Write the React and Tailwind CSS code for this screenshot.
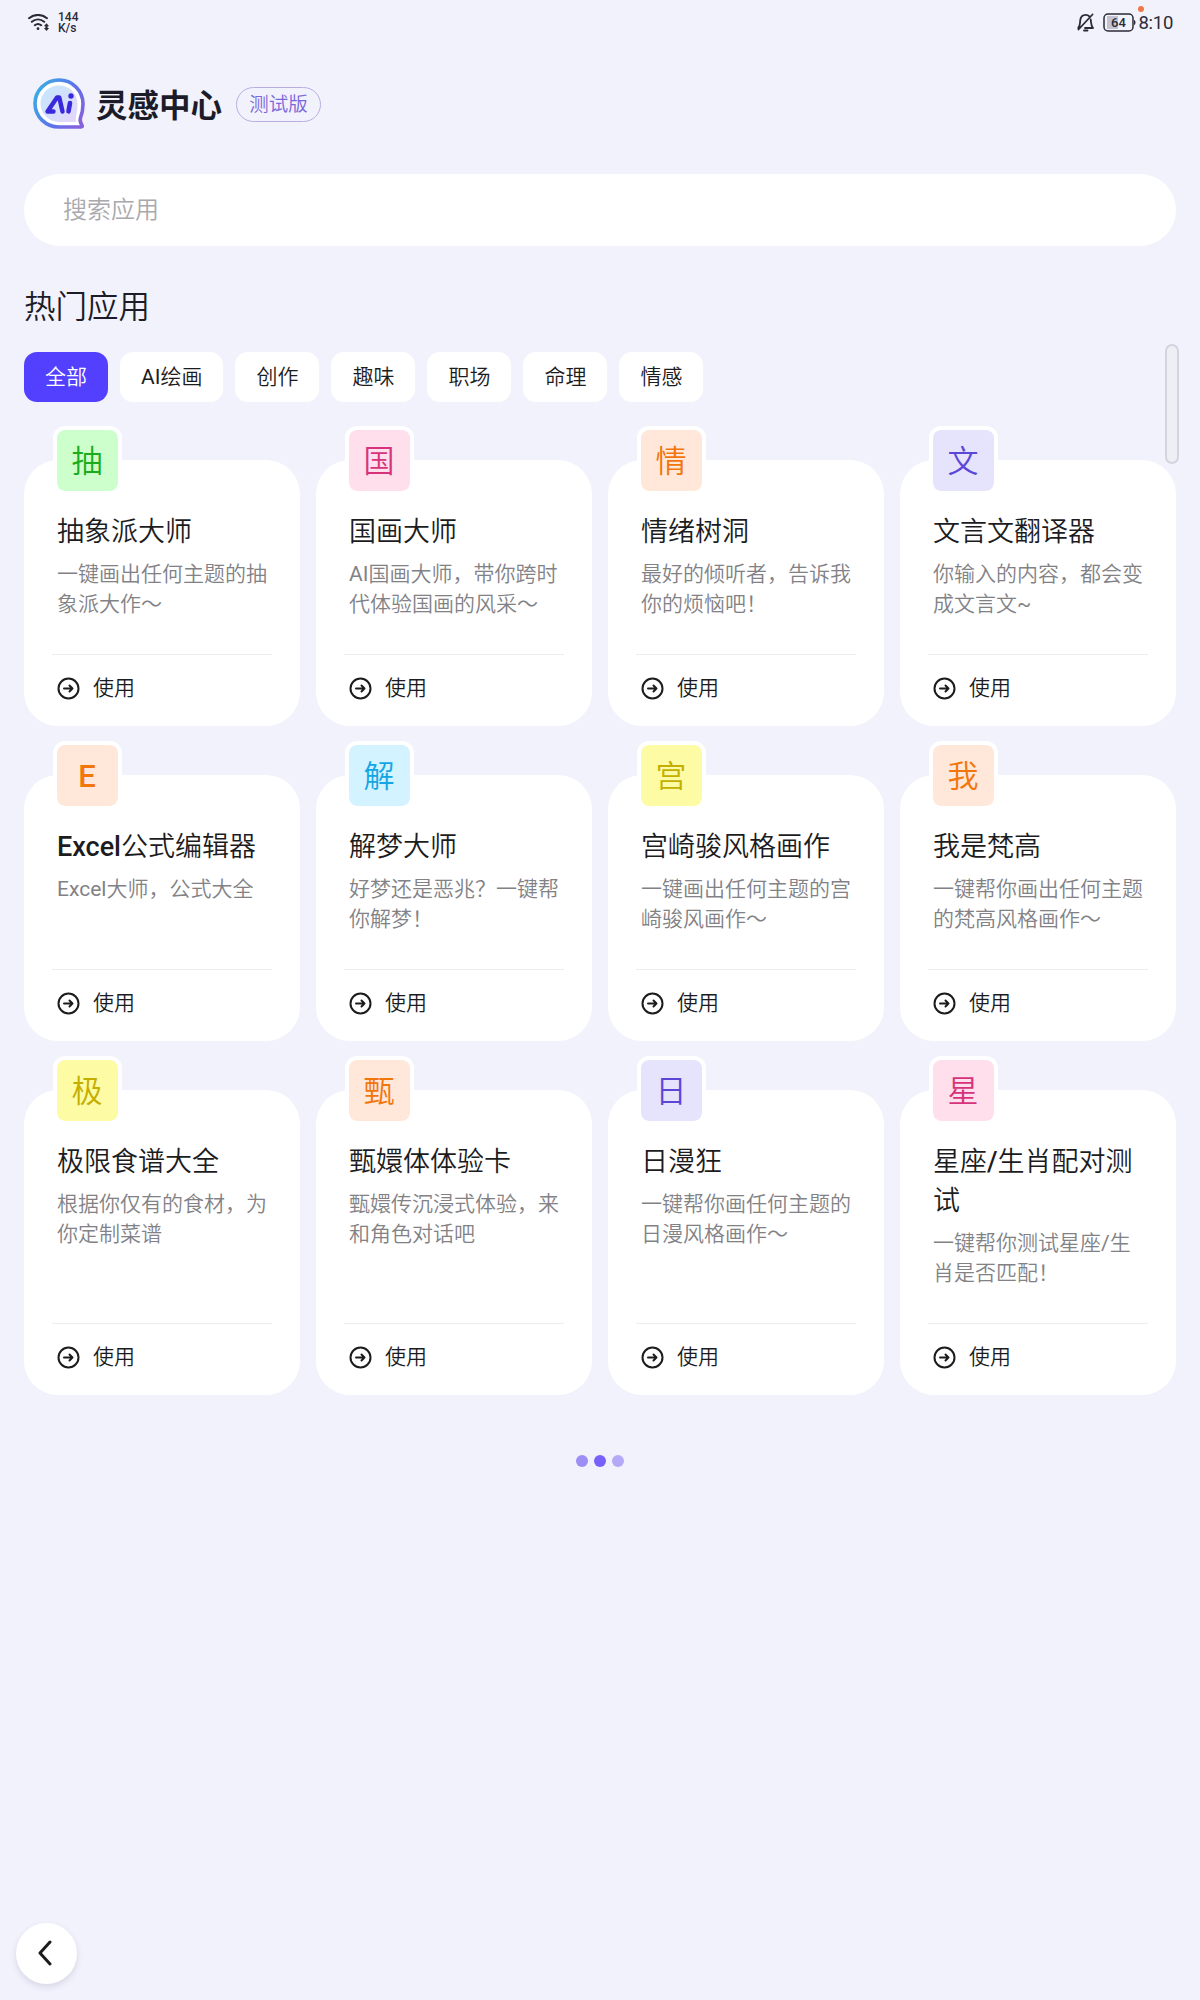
import React, { useState } from "react";

const apps = [
  { icon: "抽", name: "抽象派大师", desc: "一键画出任何主题的抽象派大作～", color: "bg-[#ccffcc] text-[#1aad19]" },
  { icon: "国", name: "国画大师", desc: "AI国画大师，带你跨时代体验国画的风采～", color: "bg-[#ffdfeb] text-[#d6337c]" },
  { icon: "情", name: "情绪树洞", desc: "最好的倾听者，告诉我你的烦恼吧！", color: "bg-[#ffe8d9] text-[#f2760c]" },
  { icon: "文", name: "文言文翻译器", desc: "你输入的内容，都会变成文言文~", color: "bg-[#e6e4fd] text-[#5b46d8]" },
  { icon: "E", name: "Excel公式编辑器", desc: "Excel大师，公式大全", color: "bg-[#ffe8d9] text-[#f2760c]" },
  { icon: "解", name: "解梦大师", desc: "好梦还是恶兆？一键帮你解梦！", color: "bg-[#d2f3ff] text-[#14a6e4]" },
  { icon: "宫", name: "宫崎骏风格画作", desc: "一键画出任何主题的宫崎骏风画作～", color: "bg-[#fdfba4] text-[#c4ae00]" },
  { icon: "我", name: "我是梵高", desc: "一键帮你画出任何主题的梵高风格画作～", color: "bg-[#ffe8d9] text-[#f2760c]" },
  { icon: "极", name: "极限食谱大全", desc: "根据你仅有的食材，为你定制菜谱", color: "bg-[#fdfba4] text-[#c4ae00]" },
  { icon: "甄", name: "甄嬛体体验卡", desc: "甄嬛传沉浸式体验，来和角色对话吧", color: "bg-[#ffe8d9] text-[#f2760c]" },
  { icon: "日", name: "日漫狂", desc: "一键帮你画任何主题的日漫风格画作～", color: "bg-[#e6e4fd] text-[#5b46d8]" },
  { icon: "星", name: "星座/生肖配对测试", desc: "一键帮你测试星座/生肖是否匹配！", color: "bg-[#ffdfeb] text-[#d6337c]" },
];

const tabs = ["全部", "AI绘画", "创作", "趣味", "职场", "命理", "情感"];

// Latin letters are set heavier than the Chinese text around them
const MixedText = ({ text, latin = "font-normal" }) =>
  text.split(/([A-Za-z/~]+)/).map((part, i) =>
    i % 2 ? (
      <span key={i} className={latin}>
        {part}
      </span>
    ) : (
      part
    )
  );

const StatusBar = () => (
  <div className="flex h-[45px] items-center justify-between pl-7 pr-[27px] text-[#2b2b38]">
    <div className="flex items-center">
      <svg width="22" height="18" viewBox="0 0 22 18" fill="none" stroke="currentColor" strokeWidth="2" strokeLinecap="round">
        <path d="M1 4.200C6.500-.2 13.500-.2 19 4.200M3.800 7.800c3.700-3.200 8.700-3.200 12.400 0M6.800 11.200c2-1.600 4.400-1.600 6.400 0" />
        <circle cx="10" cy="14.700" r="1.400" fill="currentColor" stroke="none" />
        <path d="M18.500 9.300l2.600 3h-1.500v1.700h1.500l-2.600 3-2.600-3h1.500v-1.700h-1.500z" fill="currentColor" stroke="none" />
      </svg>
      <div className="ml-2 text-[12px] font-medium leading-[11px]">
        <div>144</div>
        <div>K/s</div>
      </div>
    </div>
    <div className="relative flex items-center">
      <svg width="17" height="19" viewBox="0 0 17 19" fill="none" stroke="currentColor" strokeWidth="1.800" strokeLinecap="round" strokeLinejoin="round">
        <path d="M1.200 15C3.400 12.500 3 10 3.200 7.500 3.600 4 6 1.800 8.700 1.800c1.500 0 2.700.5 3.600 1.500M13.700 6.500c.5 3-.1 5.500 2.300 8.500H8M7 17.500h3.500M15.500 1.500L1.500 16.500" />
      </svg>
      <svg className="ml-[9px]" width="33" height="19" viewBox="0 0 33 19">
        <path d="M4 3h11v13H4z" fill="#c3c3cf" />
        <rect x="1" y="1" width="29" height="17" rx="4" fill="none" stroke="currentColor" strokeWidth="1.500" />
        <path d="M31 7c2 .5 2 4.500 0 5z" fill="currentColor" />
        <text x="15.500" y="14" textAnchor="middle" fontSize="13" fontWeight="500" fill="currentColor">64</text>
      </svg>
      <span className="ml-[3px] text-[18.500px] leading-[22px] tracking-[-0.3px]">8:10</span>
      <span className="absolute -top-[6px] left-[61px] size-[6px] rounded-full bg-[#f07848]" />
    </div>
  </div>
);

const Logo = () => (
  <svg width="52" height="52" viewBox="0 0 52 52" fill="none">
    <defs>
      <linearGradient id="ring" x1="2" y1="12" x2="50" y2="40" gradientUnits="userSpaceOnUse">
        <stop stopColor="#3aaee4" />
        <stop offset="0.550" stopColor="#5a74ea" />
        <stop offset="1" stopColor="#8562dc" />
      </linearGradient>
      <linearGradient id="fill" x1="10" y1="8" x2="42" y2="44" gradientUnits="userSpaceOnUse">
        <stop stopColor="#c4e8fb" />
        <stop offset="1" stopColor="#e4d6fb" />
      </linearGradient>
    </defs>
    <path d="M26 2C12.700 2 2 12.500 2 25.500S12.700 49 26 49h22c1.300 0 1.700-.8 1-1.800-1.500-2.200-2.300-4.500-1.600-7C49 36 50 31 50 26 50 12.500 39.300 2 26 2z" fill="#fff" stroke="url(#ring)" strokeWidth="3.600" />
    <path d="M26 7.500C15.500 7.500 7.500 15.500 7.500 25.500S15.500 44 26 44h17c-1-4 1.500-9 1.500-18C44.500 15.500 36.500 7.500 26 7.500z" fill="url(#fill)" />
    <path d="M20.500 33.500H14.500L24 19.500h2.300L29.500 33.500" stroke="#3a28dc" strokeWidth="4.400" strokeLinejoin="round" strokeLinecap="round" />
    <path d="M37 25l-1.500 8.300" stroke="#3a28dc" strokeWidth="4.600" strokeLinecap="round" />
    <circle cx="38" cy="18" r="2.700" fill="#3a28dc" />
  </svg>
);

const AppCard = ({ app }) => (
  <div className="relative flex flex-col rounded-[34px] bg-white px-7 pb-[22px] pt-[53px]">
    <div className={`absolute -top-[34px] left-[28.500px] flex size-[69px] items-center justify-center rounded-[12px] border-4 border-white bg-clip-padding pt-[3px] text-[31px] font-[350] ${app.color}`}>
      <MixedText text={app.icon} latin="font-medium" />
    </div>
    <h3 className="px-[5px] text-[27px] font-[350] leading-[39px] text-[#1c1c1e]">
      <MixedText text={app.name} latin="font-medium" />
    </h3>
    <p className="mt-[7px] min-h-[60px] px-[5px] text-[21px] font-[350] leading-[30px] text-[#828286]">
      <MixedText text={app.desc} />
    </p>
    <div className="mt-auto pt-[35px]">
      <div className="flex items-center border-t border-[#ececf0] pl-[5px] pt-[17px] text-[#1c1c1e]">
        <svg width="23" height="23" viewBox="0 0 23 23" fill="none" stroke="currentColor" strokeWidth="2" strokeLinecap="round" strokeLinejoin="round">
          <circle cx="11.500" cy="11.500" r="10" />
          <path d="M7 11.500h8.500M12.500 8.500l3 3-3 3" />
        </svg>
        <span className="ml-[13px] text-[21px] font-[350] leading-[32px]">使用</span>
      </div>
    </div>
  </div>
);

const App = () => {
  const [active, setActive] = useState("全部");

  return (
    <div className="relative h-[2000px] w-[1200px] overflow-hidden bg-[#f2f2fd] font-['Roboto','Noto_Sans_CJK_SC',sans-serif] text-[#1c1c28]">
      <StatusBar />
      {/* Header */}
      <div className="mt-8 flex h-[54px] items-center pl-[33px]">
        <Logo />
        <h1 className="ml-[11px] pt-[6px] text-[31.500px] font-bold leading-[46px]">灵感中心</h1>
        <span className="ml-[14px] flex h-[35px] w-[85px] items-center justify-center rounded-full border border-[#b9aedf] pt-[2px] text-[19.500px] font-[350] text-[#7b68d8]">
          测试版
        </span>
      </div>
      <div className="mx-6 mt-[43px] h-[72px] rounded-full bg-white">
        <input type="text" placeholder="搜索应用" className="h-full w-full rounded-full px-[39px] text-2xl font-[350] placeholder:text-[#a9a9ad] focus:outline-none" />
      </div>
      <h2 className="ml-6 mt-[39px] text-[31.500px] font-[350] leading-[46px]">热门应用</h2>
      <div className="ml-6 mt-[21px] flex gap-3">
        {tabs.map((tab) => (
          <button
            key={tab}
            onClick={() => setActive(tab)}
            className={`h-[50px] rounded-[13px] px-[21px] pt-px text-[21px] font-[350] ${active === tab ? "bg-[#5340ff] text-white" : "bg-white text-[#1c1c1e]"}`}
          >
            <MixedText text={tab} />
          </button>
        ))}
      </div>
      {/* App list */}
      <div className="mx-6 mt-[58px] grid grid-cols-4 gap-x-4 gap-y-[49px]">
        {apps.map((app) => (
          <AppCard key={app.name} app={app} />
        ))}
      </div>
      <div className="mt-[60px] flex justify-center gap-[6px]">
        <span className="size-3 rounded-full bg-[#9c8ef5]" />
        <span className="size-3 rounded-full bg-[#7662f8]" />
        <span className="size-3 rounded-full bg-[#b5a9f7]" />
      </div>
      {/* Scrollbar */}
      <div className="absolute left-[1165px] top-[344px] h-[120px] w-[14px] rounded-full border-2 border-[#d4d4de] bg-[#eeeef4]" />
      <button className="absolute bottom-4 left-4 flex size-[61px] items-center justify-center rounded-full bg-white pb-[2px] pr-[4px] text-[#1c1c1e] shadow-[0_3px_6px_rgba(60,60,90,0.14)]">
        <svg width="16" height="26" viewBox="0 0 16 26" fill="none" stroke="currentColor" strokeWidth="3" strokeLinecap="round" strokeLinejoin="round">
          <path d="M13 2L3 13l10 11" />
        </svg>
      </button>
    </div>
  );
};

export default App;
